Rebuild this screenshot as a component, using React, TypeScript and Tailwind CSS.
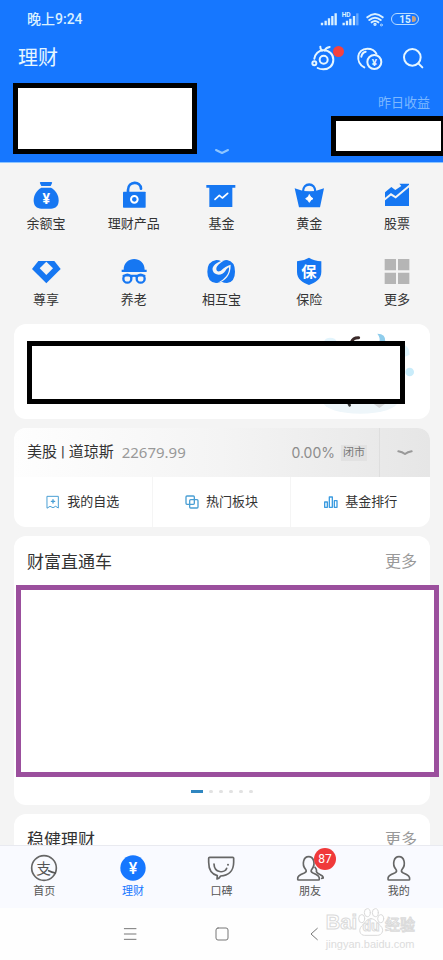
import React from "react";

const blue = "#1677f2";

type IconProps = {
  box: string;
  w: number;
  h?: number;
  children: React.ReactNode;
};

function Icon({ box, w, h = w, children }: IconProps) {
  return (
    <svg
      width={w}
      height={h}
      viewBox={box}
      fill="none"
      strokeLinecap="round"
      strokeLinejoin="round"
      className="shrink-0"
      aria-hidden="true"
    >
      {children}
    </svg>
  );
}

const services = [
  {
    label: "余额宝",
    icon: (
      <Icon box="90 42 96 96" w={32}>
        <path d="M122 48h32q4 1 2 4l-4 8h-28l-4-8q-2-3 2-4z" fill={blue} />
        <path
          d="M124 65h29c14 7 23 22 23 38c0 17-9 25-23 25h-29c-14 0-23-8-23-25c0-16 9-31 23-38z"
          fill={blue}
        />
        <text x="139" y="114" fontSize="42" fontWeight="700" textAnchor="middle" fill="#fff">
          ¥
        </text>
      </Icon>
    ),
  },
  {
    label: "理财产品",
    icon: (
      <Icon box="353 42 96 96" w={32}>
        <path d="M383 80v-8c0-28 39-28 39-4" stroke={blue} strokeWidth="8" />
        <rect x="368" y="77" width="68" height="48" rx="2" fill={blue} />
        <circle cx="402" cy="100" r="10" stroke="#fff" strokeWidth="6" />
      </Icon>
    ),
  },
  {
    label: "基金",
    icon: (
      <Icon box="32 27 96 96" w={32}>
        <path d="M36 42h87v8h-9v58H45V50h-9z" fill={blue} />
        <path d="M62 85l13-12 9 8 16-14" stroke="#fff" strokeWidth="5" />
      </Icon>
    ),
  },
  {
    label: "黄金",
    icon: (
      <Icon box="213 42 96 96" w={32}>
        <path d="M243 78c0-30 37-30 37 0" stroke={blue} strokeWidth="7" />
        <path d="M218 67q20 9 44 9t44-9l-12 57h-63z" fill={blue} />
        <path d="M262 87q3 8 11 11q-8 3-11 11q-3-8-11-11q8-3 11-11z" fill="#fff" stroke="#fff" strokeWidth="3" />
      </Icon>
    ),
  },
  {
    label: "股票",
    icon: (
      <Icon box="477 42 96 96" w={32}>
        <path d="M489 120V79l19-16 12 9 18-12-6-7h29v67z" fill={blue} />
        <path d="M485 103l22-18 14 9 44-37" stroke="#f4f4f4" strokeWidth="6" strokeLinecap="butt" strokeLinejoin="miter" />
      </Icon>
    ),
  },
  {
    label: "尊享",
    icon: (
      <Icon box="90 270 96 96" w={32}>
        <path d="M115 285h48l19 24-43 43-43-43z" fill={blue} />
        <path d="M139 287l20 20-20 20-20-20z" fill="#f4f4f4" />
      </Icon>
    ),
  },
  {
    label: "养老",
    icon: (
      <Icon box="353 270 96 96" w={32}>
        <path d="M370 311c0-43 63-43 63 0h6v7h-75v-7z" fill={blue} />
        <circle cx="381" cy="338" r="12" stroke={blue} strokeWidth="7" />
        <circle cx="421" cy="338" r="12" stroke={blue} strokeWidth="7" />
        <path d="M393 333q8-6 16 0M369 329h64" stroke={blue} strokeWidth="5" />
      </Icon>
    ),
  },
  {
    label: "相互宝",
    icon: (
      <Icon box="32 255 96 96" w={32}>
        <path
          d="M66 267q8 0 15 4q8-4 17-4q24 4 24 35t-24 34q-9 0-16-4q-8 4-17 4q-26-3-26-34t27-35z"
          fill={blue}
        />
        <path
          d="M92 267C66 273 52 285 55 298C59 315 84 315 93 300C96 294 101 290 104 289C106 308 92 324 70 336C92 330 110 314 109 281C98 284 88 290 82 297C75 304 66 302 66 294C66 284 78 275 92 267z"
          fill="#f4f4f4"
        />
      </Icon>
    ),
  },
  {
    label: "保险",
    icon: (
      <Icon box="213 270 96 96" w={32}>
        <path d="M261 275q16 10 37 11v32c0 22-18 32-37 39c-19-7-36-17-36-39v-32q20-1 36-11z" fill={blue} />
        <text x="261" y="332" fontSize="46" fontWeight="700" textAnchor="middle" fill="#fff">
          保
        </text>
      </Icon>
    ),
  },
  {
    label: "更多",
    icon: (
      <Icon box="477 270 96 96" w={32}>
        <path d="M488 279h34v34h-34zM528 279h34v34h-34zM488 320h34v34h-34zM528 320h34v34h-34z" fill="#b5b5b5" />
      </Icon>
    ),
  },
];

const shortcuts = [
  {
    label: "我的自选",
    icon: (
      <Icon box="138 210 42 42" w={14}>
        <path d="M142 214h33v35l-8-5-8 4-9-4-8 5z" stroke="#4a9fd4" strokeWidth="3" />
        <path d="M159 224v10M154 229h10" stroke="#4a9fd4" strokeWidth="4" />
      </Icon>
    ),
  },
  {
    label: "热门板块",
    icon: (
      <Icon box="554 210 42 42" w={14}>
        <rect x="557" y="213" width="25" height="25" rx="3" stroke="#4a9fd4" strokeWidth="4" />
        <rect x="568" y="224" width="25" height="25" rx="3" stroke="#4a9fd4" strokeWidth="4" />
      </Icon>
    ),
  },
  {
    label: "基金排行",
    icon: (
      <Icon box="304 211 42 42" w={14}>
        <path d="M306 232h8v16h-8zM320 217h9v31h-9zM335 228h8v20h-8z" stroke="#3b9be0" strokeWidth="4" />
      </Icon>
    ),
  },
];

const person =
  "M225 344c-1-9 4-13 20-19c7-3 7-7 3-12c-11-14-6-37 10-37s21 23 10 37c-4 5-4 9 3 12c15 6 20 10 19 19q0 2-3 2h-59q-3 0-3-2z";

const tabs = [
  {
    label: "首页",
    icon: (
      <Icon box="90 268 84 84" w={28}>
        <circle cx="132" cy="310" r="37" stroke="#666" strokeWidth="5" />
        <text x="131" y="327" fontSize="44" textAnchor="middle" fill="#555">
          支
        </text>
        <path d="M146 318q10 5 20 7" stroke="#555" strokeWidth="5" />
      </Icon>
    ),
  },
  {
    label: "理财",
    active: true,
    icon: (
      <Icon box="356 268 84 84" w={28}>
        <circle cx="398" cy="310" r="38" fill="#1677ff" />
        <text x="398" y="327" fontSize="48" fontWeight="500" textAnchor="middle" fill="#fff">
          ¥
        </text>
      </Icon>
    ),
  },
  {
    label: "口碑",
    icon: (
      <Icon box="52 27 84 84" w={28}>
        <path
          d="M60 37h69q3 0 3 3v12c0 27-17 40-39 41q-4 7-11 9l1-10c-16-4-26-17-26-40v-12q0-3 3-3z"
          stroke="#666"
          strokeWidth="5"
        />
        <path d="M73 57c1 28 32 28 38 13" stroke="#666" strokeWidth="5" />
        <circle cx="115" cy="59" r="3" fill="#666" />
      </Icon>
    ),
  },
  {
    label: "朋友",
    badge: "87",
    icon: (
      <Icon box="220 268 84 84" w={28}>
        <path d={person} stroke="#666" strokeWidth="5" />
        <path d="M277 308q6 8 4 12q1 5 12 10q9 4 9 10l-5 1" stroke="#666" strokeWidth="5" />
      </Icon>
    ),
  },
  {
    label: "我的",
    icon: (
      <Icon box="216 268 84 84" w={28}>
        <path d={person} stroke="#666" strokeWidth="5" />
      </Icon>
    ),
  },
];

function StatusBar() {
  return (
    <div className="flex h-[38px] items-center justify-between pr-6 pl-[27px] text-[#d9f0ff]">
      <span className="text-sm font-medium">晚上9:24</span>
      <div className="flex items-center gap-[7px]">
        <Icon box="298 36 117 42" w={39} h={14}>
          <g stroke="currentColor" strokeWidth="7" strokeLinecap="butt">
            <path d="M304 76v-8M315 76v-14M325 76v-21M335 76v-28M345 76v-36" />
            <path d="M369 76v-8M379 76v-14M389 76v-20M400 76v-28" />
            <path d="M410 76v-36" opacity="0.4" />
          </g>
          <text x="363" y="51" fontSize="20" fontWeight="700" fill="currentColor">
            HD
          </text>
        </Icon>
        <Icon box="434 36 54 45" w={18} h={15}>
          <g stroke="currentColor" strokeWidth="6">
            <path d="M438 52q23-20 46 0M444 60q17-14 34 0M451 67q10-8 20 0" />
            <circle cx="461" cy="73" r="2" />
            <circle cx="480" cy="75" r="3" strokeWidth="2" />
          </g>
        </Icon>
        <span className="relative flex h-3 w-7 items-center justify-center overflow-hidden rounded-full border border-[#b8dcff] text-[10px] font-bold">
          15
          <i className="absolute inset-y-0.5 right-0.5 w-1 rounded-r-full bg-[#c9a27c]" />
        </span>
      </div>
    </div>
  );
}

function Header() {
  return (
    <header className="shrink-0 overflow-hidden border-b border-[#8cc4ff] bg-[#1677ff] text-[#e6f6ff]">
      <StatusBar />
      <div className="flex h-10 items-center justify-between pr-[19px] pl-[18px]">
        <h1 className="text-xl leading-6">理财</h1>
        <div className="flex items-center gap-[18px]">
          <button type="button" aria-label="小助手" className="relative">
            <Icon box="264 126 84 84" w={28}>
              <g stroke="currentColor" strokeWidth="6">
                <path d="M277 170c2-14 13-25 27-25c18 0 30 12 30 28c0 18-13 29-30 29q-10 0-17-4" />
                <circle cx="305" cy="173" r="12" />
                <circle cx="277" cy="184" r="6" />
                <path d="M300 145q-6-4-5-11M308 145q4-8 15-10" />
              </g>
            </Icon>
            <i className="absolute top-0.5 -right-1.5 size-[11px] rounded-full bg-[#f5413f]" />
          </button>
          <button type="button" aria-label="资产">
            <Icon box="402 129 84 84" w={28}>
              <g stroke="currentColor" strokeWidth="6">
                <path d="M427 199c-28-14-23-56 9-56q20 0 27 15" />
                <path d="M418 167q2-12 13-15" />
                <circle cx="457" cy="183" r="21" />
              </g>
              <text x="457" y="194" fontSize="29" fontWeight="700" textAnchor="middle" fill="currentColor">
                ¥
              </text>
            </Icon>
          </button>
          <button type="button" aria-label="搜索">
            <Icon box="540 138 66 66" w={22}>
              <g stroke="currentColor" strokeWidth="6">
                <circle cx="571" cy="169" r="25" />
                <path d="M589 187l12 12" />
              </g>
            </Icon>
          </button>
        </div>
      </div>
      <div className="grid h-[84px] grid-cols-[1fr_auto_1fr] pt-[5px]">
        <div className="ml-[13px] h-[71px] w-[184px] border-5 border-black bg-white" />
        <button type="button" aria-label="展开" className="mb-1.5 self-end">
          <Icon box="0 0 42 24" w={14} h={8}>
            <path d="M3 6l18 9 18-9" stroke="#8fc6ff" strokeWidth="6" />
          </Icon>
        </button>
        <div className="flex flex-col items-end pt-2.5">
          <span className="pr-[13px] text-[13px] leading-5 text-[#7db8ff]">昨日收益</span>
          <div className="-mr-[3px] mt-[3px] h-10 w-[115px] border-5 border-black bg-white" />
        </div>
      </div>
    </header>
  );
}

function Services() {
  return (
    <nav className="grid grid-cols-5 gap-y-[22px] px-0.5 pt-[17px] pb-3.5">
      {services.map((s) => (
        <a key={s.label} href="#" className="flex flex-col items-center gap-0.5 text-[13px] leading-5 text-[#333]">
          {s.icon}
          <span>{s.label}</span>
        </a>
      ))}
    </nav>
  );
}

function Banner() {
  return (
    <section className="relative overflow-hidden rounded-xl bg-white pt-[17px] pr-[25px] pb-[15px] pl-[13px]">
      {/* illustration peeking out from behind the box */}
      <div className="absolute top-0 right-0">
        <Icon box="303 12 321 285" w={107} h={95}>
          <ellipse cx="415" cy="245" rx="112" ry="36" fill="#eef6fa" />
          <ellipse cx="325" cy="64" rx="18" ry="11" fill="#e2f4fc" />
          <path d="M388 66q6-14 22-13" stroke="#3b2a2a" strokeWidth="9" />
          <path d="M466 41q26 0 24 25h-18q4-12-6-25z" fill="#8fcdec" />
          <path d="M549 76q14 8 14 28l-14 6z" fill="#e0f5fd" />
          <circle cx="563" cy="156" r="13" fill="#c9ecfa" />
          <path d="M380 250l3 6" stroke="#333" strokeWidth="8" />
          <path d="M452 250h40l-20 14z" fill="#d3d6d8" />
        </Icon>
      </div>
      <div className="relative h-[63px] border-5 border-black bg-white" />
    </section>
  );
}

function Market() {
  return (
    <section className="overflow-hidden rounded-xl bg-white">
      <div className="flex h-[49px] items-center bg-linear-to-r from-[#fefefe] via-[#f4f4f4] to-[#e6e6e6] pl-[13px]">
        <span className="text-[15px] text-[#333]">
          美股<span className="px-1">|</span>道琼斯
        </span>
        <span className="ml-2 font-['Noto_Sans'] text-[15px] text-[#999]">22679.99</span>
        <span className="ml-auto font-['Inter'] text-sm text-[#8c8c8c]">0.00%</span>
        <span className="ml-1.5 bg-[#e2e2e2] px-0.5 text-[11px] leading-4 text-[#777]">闭市</span>
        <button
          type="button"
          aria-label="展开行情"
          className="ml-3 flex h-full w-[51px] items-center justify-center border-l border-[#dedede]"
        >
          <Icon box="0 0 48 24" w={16} h={8}>
            <path d="M4 7q12 2 20 8q8-6 20-8" stroke="#999" strokeWidth="6" />
          </Icon>
        </button>
      </div>
      <div className="grid h-[50px] grid-cols-3 divide-x divide-[#f5f5f5]">
        {shortcuts.map((s) => (
          <a key={s.label} href="#" className="flex items-center justify-center gap-[7px] text-[13px] text-[#333]">
            {s.icon}
            {s.label}
          </a>
        ))}
      </div>
    </section>
  );
}

function SectionTitle({ title }: { title: string }) {
  return (
    <div className="flex h-[49px] items-center justify-between px-[13px] pt-0.5">
      <h2 className="text-[17px] leading-6 text-[#333]">{title}</h2>
      <a href="#" className="text-base leading-6 text-[#999]">
        更多
      </a>
    </div>
  );
}

function Express() {
  return (
    <section className="rounded-xl bg-white">
      <SectionTitle title="财富直通车" />
      <div className="-mr-[9px] ml-0.5 h-48 border-5 border-[#9b4f9d] bg-white" />
      <div className="flex h-7 items-center justify-center gap-1.5">
        <i className="h-[3px] w-3 bg-[#2f86c0]" />
        {[1, 2, 3, 4, 5].map((n) => (
          <i key={n} className="h-[3px] w-1 rounded-sm bg-[#e2e2e2]" />
        ))}
      </div>
    </section>
  );
}

function TabBar() {
  return (
    <nav className="grid shrink-0 grid-cols-5 border-t border-[#e9eaf0] bg-[#f9faff] pt-2 pb-2">
      {tabs.map((tab) => (
        <a
          key={tab.label}
          href="#"
          className={`flex flex-col items-center gap-0.5 text-[11px] leading-4 ${
            tab.active ? "text-[#1677ff]" : "text-[#555]"
          }`}
        >
          <span className="relative">
            {tab.icon}
            {tab.badge && (
              <b className="absolute -top-1.5 -right-3 flex size-[22px] items-center justify-center rounded-full bg-[#f0393a] text-xs font-normal text-white">
                {tab.badge}
              </b>
            )}
          </span>
          {tab.label}
        </a>
      ))}
    </nav>
  );
}

function Watermark() {
  return (
    <div className="pointer-events-none absolute right-7 bottom-2 flex flex-col font-['Liberation_Sans'] select-none">
      <div className="flex h-7 items-end leading-6 text-white [-webkit-text-stroke:1px_#dadada]">
        <span className="text-xl font-bold">Bai</span>
        <span className="relative flex w-7 justify-center">
          <span className="absolute bottom-0">
            <Icon box="400 424 84 84" w={28}>
              <g fill="#fff" stroke="#dadada" strokeWidth="3">
                <ellipse cx="414" cy="456" rx="9" ry="12" />
                <ellipse cx="431" cy="438" rx="9" ry="12" />
                <ellipse cx="455" cy="438" rx="9" ry="12" />
                <ellipse cx="471" cy="456" rx="9" ry="12" />
                <path d="M442 456c14 0 18 14 29 22c12 12 4 28-10 28h-38c-14 0-20-16-9-28c10-8 14-22 28-22z" />
              </g>
            </Icon>
          </span>
          <span className="relative text-sm leading-5 font-bold">du</span>
        </span>
        <span className="font-['Noto_Sans_CJK_SC'] text-[15px] font-medium">经验</span>
      </div>
      <span className="text-[11px] leading-4 text-[#dcdcdc]">jingyan.baidu.com</span>
    </div>
  );
}

function SystemNav() {
  return (
    <div className="relative flex h-[52px] shrink-0 items-center justify-center bg-[#fefefe] text-[#777]">
      <button type="button" aria-label="菜单" className="flex w-[92px] justify-center">
        <Icon box="369 484 42 42" w={14}>
          <path d="M373 489h35M373 505h35M373 521h35" stroke="currentColor" strokeWidth="3" />
        </Icon>
      </button>
      <button type="button" aria-label="主屏幕" className="flex w-[92px] justify-center">
        <Icon box="0 0 42 42" w={14}>
          <rect x="3" y="3" width="36" height="36" rx="6" stroke="currentColor" strokeWidth="3" />
        </Icon>
      </button>
      <button type="button" aria-label="返回" className="flex w-[92px] justify-center">
        <Icon box="257 484 42 42" w={14}>
          <path d="M288 488l-19 17 19 17" stroke="currentColor" strokeWidth="3" />
        </Icon>
      </button>
      <Watermark />
    </div>
  );
}

export default function App() {
  return (
    <div className="flex h-screen flex-col overflow-hidden bg-[#f4f4f4] font-['Roboto','Noto_Sans_CJK_SC',sans-serif]">
      <Header />
      <main className="min-h-0 flex-1 overflow-hidden">
        <Services />
        <div className="flex flex-col gap-[9px] pr-[13px] pl-3.5">
          <Banner />
          <Market />
          <Express />
          <section className="rounded-t-xl bg-white">
            <SectionTitle title="稳健理财" />
          </section>
        </div>
      </main>
      <TabBar />
      <SystemNav />
    </div>
  );
}
